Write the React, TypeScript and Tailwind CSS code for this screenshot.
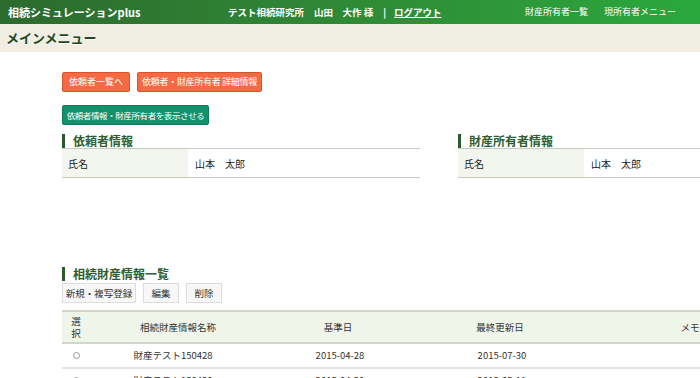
import { Fragment } from 'react'

const font = { fontFamily: '"Noto Sans CJK JP", "Noto Sans", sans-serif' }

const rows = [
  { name: '財産テスト150428', base: '2015-04-28', updated: '2015-07-30' },
  { name: '財産テスト150430', base: '2015-04-30', updated: '2015-05-11' },
]

const SectionTitle = ({ children }: { children: string }) => (
  <div className="flex items-center h-[14px] border-l-[3px] border-[#2d5a2d] pl-[8px]">
    <span className="text-[12px] font-bold text-[#2f5d2f] leading-none">{children}</span>
  </div>
)

const InfoPanel = ({ title }: { title: string }) => (
  <div className="w-[358px] shrink-0">
    <SectionTitle>{title}</SectionTitle>
    <div className="flex h-[30px] border-t border-b border-[#c5ccc0] text-[10px] text-[#222]">
      <div className="w-[126px] bg-[#f2f6ef] flex items-center pl-[6px]">氏名</div>
      <div className="flex items-center pl-[7px]">山本　太郎</div>
    </div>
  </div>
)

const App = () => {
  return (
    <div className="w-[700px] h-[378px] overflow-hidden bg-white" style={font}>
      {/* Header */}
      <div className="h-[24px] flex items-center bg-gradient-to-r from-[#2c6a2e] via-[#2f8a36] to-[#2aa83d] text-white">
        <div className="pl-[8px] w-[228px] text-[11px] font-bold">相続シミュレーションplus</div>
        <div className="flex items-center text-[9.5px] font-bold gap-[10px]">
          <span>テスト相続研究所</span>
          <span>山田　大作 様</span>
          <span>|</span>
          <span className="underline -ml-[2px]">ログアウト</span>
        </div>
        <div className="ml-auto flex gap-[16px] pr-[24px] text-[9px]">
          <span>財産所有者一覧</span>
          <span>現所有者メニュー</span>
        </div>
      </div>

      {/* Sub header */}
      <div className="h-[28px] bg-[#f0ede3] flex items-center pl-[6px]">
        <h1 className="text-[13px] font-bold text-[#234a25] [text-shadow:0_1px_0_#fff]">メインメニュー</h1>
      </div>

      <div className="pl-[62px] pt-[20px]">
        <div className="flex gap-[7px]">
          <button className="block h-[20px] w-[68px] bg-[#f56a43] border border-[#d9532e] text-white text-[9px] whitespace-nowrap rounded-[2px]">依頼者一覧へ</button>
          <button className="block h-[20px] w-[125px] bg-[#f56a43] border border-[#d9532e] text-white text-[9px] whitespace-nowrap rounded-[2px] tracking-[-0.3px]">依頼者・財産所有者 詳細情報</button>
        </div>
        <button className="block mt-[13px] h-[20px] w-[147px] bg-[#14906c] border border-[#0e7a5a] text-white text-[8.5px] whitespace-nowrap tracking-[-0.4px] rounded-[2px]">依頼者情報・財産所有者を表示させる</button>

        <div className="mt-[9px] flex gap-[38px]">
          <InfoPanel title="依頼者情報" />
          <InfoPanel title="財産所有者情報" />
        </div>

        {/* Inheritance list */}
        <div className="mt-[89px]">
          <SectionTitle>相続財産情報一覧</SectionTitle>
          <div className="flex gap-[7px] mt-[2px]">
            {['新規・複写登録', '編集', '削除'].map((b, i) => (
              <button key={b}
                className={`block h-[20px] bg-[#f7f7f7] border border-[#dcdcdc] text-[#333] text-[9.5px] whitespace-nowrap ${i === 0 ? 'w-[74px]' : 'w-[36px]'}`}>
                {b}
              </button>
            ))}
          </div>
          <div className="mt-[7px] w-[740px] text-[9.5px] text-[#333]">
            <div className="flex h-[34px] bg-[#f0f5ea] border-t-2 border-b-2 border-[#d0d6cb] items-center">
              <div className="w-[28px] flex flex-col items-center leading-[12px]">
                <span>選</span>
                <span>択</span>
              </div>
              <div className="w-[176px] text-center">相続財産情報名称</div>
              <div className="w-[144px] text-center">基準日</div>
              <div className="w-[180px] text-center">最終更新日</div>
              <div className="w-[200px] text-center">メモ</div>
            </div>
            {rows.map(r => (
              <Fragment key={r.name}>
                <div className="flex h-[25px] items-center border-b-2 border-[#e2e6de]">
                  <div className="w-[28px] flex justify-center">
                    <span className="w-[7px] h-[7px] rounded-full border border-[#999]" />
                  </div>
                  <div className="w-[166px] text-center">{r.name}</div>
                  <div className="w-[168px] text-center">{r.base}</div>
                  <div className="w-[156px] text-center">{r.updated}</div>
                  <div className="w-[200px]" />
                </div>
              </Fragment>
            ))}
          </div>
        </div>
      </div>
    </div>
  )
}
export default App
